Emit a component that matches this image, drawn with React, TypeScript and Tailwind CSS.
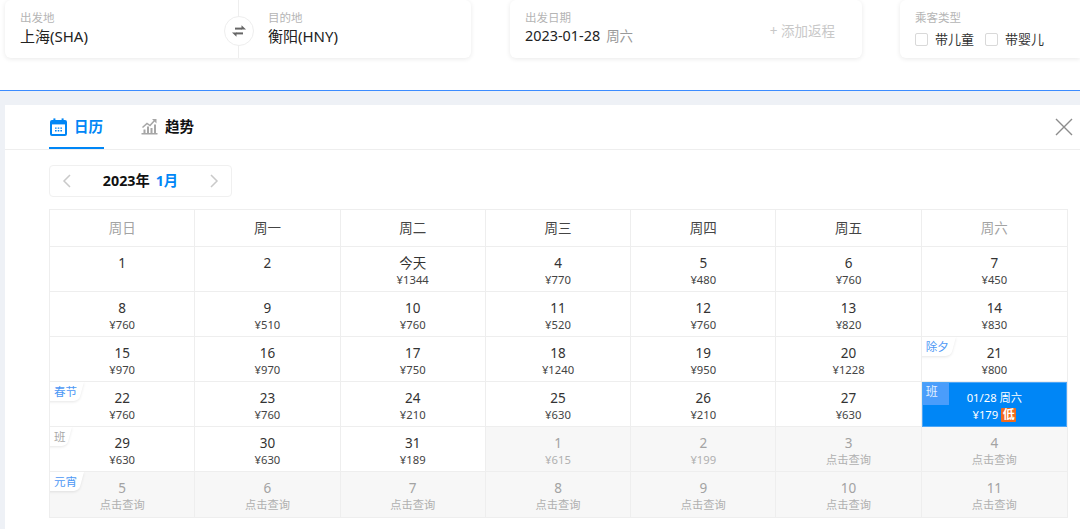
const fontStack = { fontFamily: '"Noto Sans", "Noto Sans CJK SC", sans-serif' };

type Day = {
  n: string;
  price?: string;
  tag?: string;
  muted?: boolean;
};

const weekdays = ["周日", "周一", "周二", "周三", "周四", "周五", "周六"];

const days: Day[] = [
  { n: "1" },
  { n: "2" },
  { n: "今天", price: "¥1344" },
  { n: "4", price: "¥770" },
  { n: "5", price: "¥480" },
  { n: "6", price: "¥760" },
  { n: "7", price: "¥450" },
  { n: "8", price: "¥760" },
  { n: "9", price: "¥510" },
  { n: "10", price: "¥760" },
  { n: "11", price: "¥520" },
  { n: "12", price: "¥760" },
  { n: "13", price: "¥820" },
  { n: "14", price: "¥830" },
  { n: "15", price: "¥970" },
  { n: "16", price: "¥970" },
  { n: "17", price: "¥750" },
  { n: "18", price: "¥1240" },
  { n: "19", price: "¥950" },
  { n: "20", price: "¥1228" },
  { n: "21", price: "¥800", tag: "除夕" },
  { n: "22", price: "¥760", tag: "春节" },
  { n: "23", price: "¥760" },
  { n: "24", price: "¥210" },
  { n: "25", price: "¥630" },
  { n: "26", price: "¥210" },
  { n: "27", price: "¥630" },
  { n: "selected" },
  { n: "29", price: "¥630", tag: "班" },
  { n: "30", price: "¥630" },
  { n: "31", price: "¥189" },
  { n: "1", price: "¥615", muted: true },
  { n: "2", price: "¥199", muted: true },
  { n: "3", price: "点击查询", muted: true },
  { n: "4", price: "点击查询", muted: true },
  { n: "5", price: "点击查询", muted: true, tag: "元宵" },
  { n: "6", price: "点击查询", muted: true },
  { n: "7", price: "点击查询", muted: true },
  { n: "8", price: "点击查询", muted: true },
  { n: "9", price: "点击查询", muted: true },
  { n: "10", price: "点击查询", muted: true },
  { n: "11", price: "点击查询", muted: true },
];

function SwapIcon() {
  return (
    <svg width="16" height="14" viewBox="0 0 16 14" fill="none">
      <path d="M4 4.6H11" stroke="#666" strokeWidth="2" />
      <path d="M10.5 1.2L15 5.4H10.5Z" fill="#666" />
      <path d="M12 9.4H5" stroke="#666" strokeWidth="2" />
      <path d="M5.5 12.8L1 8.6H5.5Z" fill="#666" />
    </svg>
  );
}

function CalendarIcon() {
  return (
    <svg width="17" height="18" viewBox="0 0 17 18" fill="none">
      <rect x="1" y="3" width="15" height="14" rx="1" stroke="#0086f6" strokeWidth="2" />
      <rect x="1" y="3" width="15" height="3.4" fill="#0086f6" />
      <rect x="3.4" y="0.4" width="2" height="3.8" fill="#0086f6" />
      <rect x="11.6" y="0.4" width="2" height="3.8" fill="#0086f6" />
      <path d="M5 9.4h1.6v1.4H5zM7.7 9.4h1.6v1.4H7.7zM10.4 9.4H12v1.4h-1.6zM5 12h1.6v1.4H5zM7.7 12h1.6v1.4H7.7zM10.4 12H12v1.4h-1.6z" fill="#0086f6" />
    </svg>
  );
}

function TrendIcon() {
  return (
    <svg width="17" height="17" viewBox="0 0 17 17" fill="none">
      <path d="M1.5 9.5L6 5.5L9 7.5L14 2" stroke="#a6a6a6" strokeWidth="1.5" />
      <path d="M11 1H15.5V5.5Z" fill="#a6a6a6" />
      <path d="M2.5 11.5H4.5V15H2.5ZM6 8.5H8V15H6ZM9.5 10H11.5V15H9.5ZM13 6.5H15V15H13Z" fill="#a6a6a6" />
      <rect x="0.5" y="15" width="16" height="1.5" fill="#a6a6a6" />
    </svg>
  );
}

function Chevron({ dir }: { dir: "left" | "right" }) {
  return (
    <svg width="10" height="14" viewBox="0 0 10 14" fill="none">
      <path d={dir === "left" ? "M8 1L2 7L8 13" : "M2 1L8 7L2 13"} stroke="#c9c9c9" strokeWidth="1.5" />
    </svg>
  );
}

function Tag({ text, gray }: { text: string; gray: boolean }) {
  const wide = text.length > 1;
  return (
    <div className={`absolute left-0 top-0 h-[24px] overflow-hidden ${wide ? "w-[38px]" : "w-[28px]"}`}>
      <div className={`absolute -left-[8px] top-0 h-[19px] origin-top-left -skew-x-[15deg] rounded-br-[5px] bg-white shadow-[0_1px_3px_rgba(0,0,0,0.1)] ${wide ? "w-[42px]" : "w-[30px]"}`} />
      <span className={`absolute left-[4px] top-[1px] text-[11.5px] leading-[17px] ${gray ? "text-[#a8a8a8]" : "text-[#4d98f5]"}`}>{text}</span>
    </div>
  );
}

function DayCell({ day, col, row }: { day: Day; col: number; row: number }) {
  const edge = `${col < 6 ? "border-r" : ""} ${row < 5 ? "border-b" : ""} border-[#eeeeee]`;
  if (day.n === "selected") {
    return (
      <div className="relative flex h-[45px] flex-col items-center border border-[#4da6f7] bg-[#0086f6] pt-[7px] text-[11.25px] leading-[16px] text-white">
        <div className="absolute left-0 top-0 flex h-[22px] w-[26px] items-start bg-[#4a9dfb] pl-[3px] pt-[1px] text-[12px] leading-[16px] text-[#e4f1ff]">班</div>
        <div>01/28 周六</div>
        <div className="mt-[1px] flex items-center gap-[3px]">
          ¥179
          <span className="flex h-[14px] w-[15px] items-center justify-center rounded-[1px] bg-[#f26a1c] text-[12px] font-bold">低</span>
        </div>
      </div>
    );
  }
  return (
    <div className={`relative flex h-[45px] flex-col items-center pt-[7px] ${edge} ${day.muted ? "bg-[#f7f7f7]" : "bg-white"}`}>
      {day.tag && <Tag text={day.tag} gray={day.tag === "班"} />}
      <div className={`text-[13.5px] leading-[18px] ${day.muted ? "text-[#a3a3a3]" : "text-[#333333]"}`}>{day.n}</div>
      {day.price && (
        <div className={`text-[11.25px] leading-[15px] ${day.muted ? "text-[#b0b0b0]" : "text-[#444444]"}`}>{day.price}</div>
      )}
    </div>
  );
}

export default function App() {
  return (
    <div style={fontStack} className="flex h-[529px] w-[1080px] flex-col overflow-hidden bg-[#eef1f6]">
      <section className="flex h-[91px] shrink-0 items-start gap-[38px] border-b border-[#3c8cff] bg-white pl-[5px]">
        <div className="relative mr-[1px] flex h-[58px] w-[466px] shrink-0 rounded-[6px] bg-white shadow-[0_1px_5px_rgba(0,0,0,0.09)]">
          <div className="w-[234px] border-r border-[#eeeeee] pl-[15px] pt-[10px]">
            <div className="text-[11.5px] leading-[16px] text-[#b5b5b5]">出发地</div>
            <div className="text-[15px] leading-[20px] text-[#222222]">上海(SHA)</div>
          </div>
          <div className="pl-[29px] pt-[10px]">
            <div className="text-[11.5px] leading-[16px] text-[#b5b5b5]">目的地</div>
            <div className="text-[15px] leading-[20px] text-[#222222]">衡阳(HNY)</div>
          </div>
          <div className="absolute left-[219px] top-[16px] flex h-[30px] w-[30px] items-center justify-center rounded-full border border-[#eeeeee] bg-white">
            <SwapIcon />
          </div>
        </div>

        <div className="flex h-[58px] w-[352px] shrink-0 justify-between rounded-[6px] bg-white pl-[15px] pr-[27px] shadow-[0_1px_5px_rgba(0,0,0,0.09)]">
          <div className="pt-[10px]">
            <div className="text-[11.5px] leading-[16px] text-[#b5b5b5]">出发日期</div>
            <div className="flex items-center text-[14.4px] leading-[20px] text-[#222222]">
              2023-01-28
              <span className="ml-[6px] text-[13.5px] text-[#999999]">周六</span>
            </div>
          </div>
          <div className="pt-[22px] text-[13.5px] leading-[18px] text-[#c8c8c8]">+ 添加返程</div>
        </div>

        <div className="h-[58px] flex-1 rounded-l-[6px] bg-white pl-[15px] pt-[10px] shadow-[0_1px_5px_rgba(0,0,0,0.09)]">
          <div className="text-[11.5px] leading-[16px] text-[#b5b5b5]">乘客类型</div>
          <div className="mt-[4px] flex items-center text-[13px] leading-[18px] text-[#333333]">
            <span className="mr-[7px] h-[13px] w-[13px] rounded-[2px] border border-[#d9d9d9]" />
            带儿童
            <span className="ml-[11px] mr-[7px] h-[13px] w-[13px] rounded-[2px] border border-[#d9d9d9]" />
            带婴儿
          </div>
        </div>
      </section>

      <main className="ml-[5px] mt-[14px] flex-1 bg-white">
        <header className="flex h-[45px] items-center justify-between border-b border-[#eeeeee] pl-[44px] pr-[7px]">
          <div className="flex h-full items-center">
            <div className="flex h-full items-center gap-[7px] border-b-[2px] border-[#0086f6] pl-[1px] pr-[1px] pt-[1px] text-[14.5px] font-bold text-[#0086f6]">
              <CalendarIcon />
              日历
            </div>
            <div className="ml-[37px] flex h-full items-center gap-[7px] pb-[1px] text-[14.5px] font-bold text-[#111111]">
              <TrendIcon />
              趋势
            </div>
          </div>
          <svg width="18" height="18" viewBox="0 0 18 18" fill="none">
            <path d="M1 1L17 17M17 1L1 17" stroke="#8c8c8c" strokeWidth="1.4" />
          </svg>
        </header>

        <div className="pl-[44px] pt-[15px]">
          <div className="flex h-[32px] w-[183px] items-center justify-between rounded-[4px] border border-[#f0f0f0] px-[12px]">
            <Chevron dir="left" />
            <div className="text-[14.25px] font-bold text-[#111111]">
              2023年<span className="ml-[6px] text-[#0086f6]">1月</span>
            </div>
            <Chevron dir="right" />
          </div>

          <div className="mt-[12px] w-[1019px] border border-[#eeeeee]">
            <div className="grid h-[37px] grid-cols-7 border-b border-[#eeeeee]">
              {weekdays.map((w, i) => (
                <div
                  key={w}
                  className={`flex items-center justify-center text-[13.5px] ${i < 6 ? "border-r border-[#eeeeee]" : ""} ${i === 0 || i === 6 ? "text-[#a3a3a3]" : "text-[#444444]"}`}
                >
                  {w}
                </div>
              ))}
            </div>
            <div className="grid grid-cols-7">
              {days.map((d, i) => (
                <DayCell key={i} day={d} col={i % 7} row={Math.floor(i / 7)} />
              ))}
            </div>
          </div>
        </div>
      </main>
    </div>
  );
}
